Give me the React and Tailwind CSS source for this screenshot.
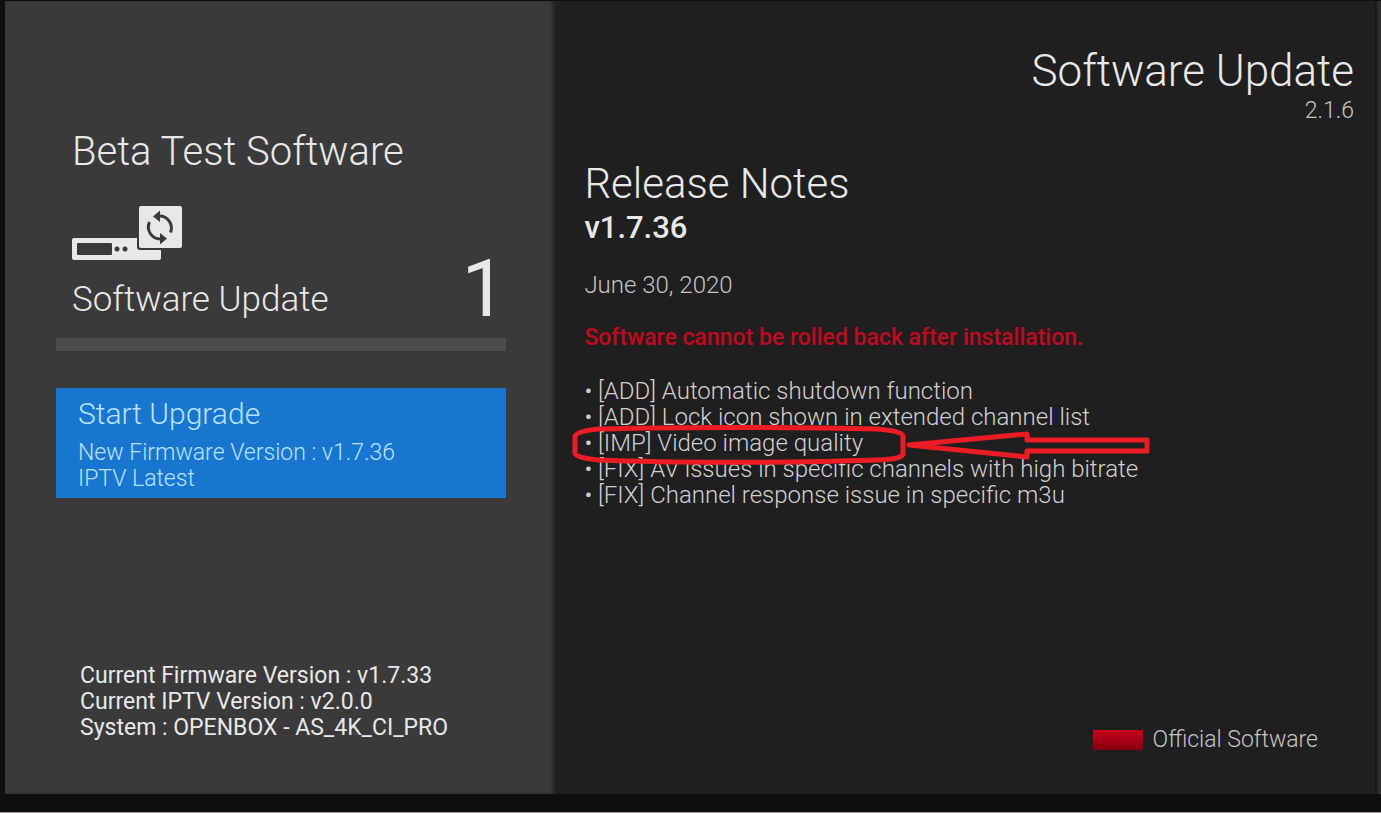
const systemInfo = [
  'Current Firmware Version : v1.7.33',
  'Current IPTV Version : v2.0.0',
  'System : OPENBOX - AS_4K_CI_PRO',
];

const releaseNotes = [
  { tag: 'ADD', text: 'Automatic shutdown function' },
  { tag: 'ADD', text: 'Lock icon shown in extended channel list' },
  { tag: 'IMP', text: 'Video image quality', marked: true },
  { tag: 'FIX', text: 'AV issues in specific channels with high bitrate' },
  { tag: 'FIX', text: 'Channel response issue in specific m3u' },
];

function ReceiverIcon() {
  return (
    <svg width="110" height="55" viewBox="0 0 110 55" fill="none" aria-hidden="true">
      <rect x="0" y="32" width="89" height="22" rx="2" fill="#e8e8e8" />
      <rect x="5" y="37" width="35" height="12" rx="1" fill="#3a3a3a" />
      <circle cx="45" cy="43" r="2.5" fill="#3a3a3a" />
      <circle cx="53" cy="43" r="2.5" fill="#3a3a3a" />
      <rect x="65" y="-2" width="47" height="46" rx="3" fill="#3a3a3a" />
      <rect x="67" y="0" width="43" height="42" rx="2" fill="#e8e8e8" />
      <g stroke="#3a3a3a" strokeWidth="3">
        <path d="M87 10 A12 12 0 0 1 98.5 26.5" />
        <path d="M77.5 16 A12 12 0 0 0 89 33" />
      </g>
      <path d="M88 4.5 V16 L81 10.5 Z" fill="#3a3a3a" />
      <path d="M88 27 V38.5 L95 32.5 Z" fill="#3a3a3a" />
    </svg>
  );
}

// Hand-drawn outline round a note, with an arrow pointing at it
function Marker() {
  return (
    <svg
      className="absolute -left-[13px] -top-1.5 z-10 pointer-events-none"
      width="582"
      height="42"
      viewBox="0 0 582 42"
      fill="none"
      stroke="#ed1c24"
      strokeWidth="5"
      strokeLinejoin="round"
      aria-hidden="true"
    >
      <path d="M28 5 C110 3 230 3 306 5 Q332 7 332 12 V30 Q332 35 306 36 C220 39 100 39 28 36 Q4 34 4 29 V13 Q4 7 28 5 Z" />
      <path d="M338 21 L456 10 V16 H576 V27 H456 V33 Z" />
    </svg>
  );
}

function Sidebar() {
  return (
    <aside className="flex w-2/5 shrink-0 flex-col bg-[#3a3a3a] pt-[127px] pr-[49px] pb-[53px] pl-[51px] shadow-[inset_-3px_0_3px_rgba(0,0,0,0.35)]">
      <h2 className="pl-4 text-[40px] leading-[48px] font-light">Beta Test Software</h2>
      <div className="mt-[30px] flex items-end justify-between pl-4">
        <div>
          <ReceiverIcon />
          <h3 className="mt-[17px] text-[35px] leading-[44px] font-light">Software Update</h3>
        </div>
        <span className="text-[80px] leading-[66px]">1</span>
      </div>
      <div className="mt-4 h-[13px] bg-[#4d4d4d]" />
      <button
        type="button"
        className="mt-[37px] block bg-[#1976d0] px-[22px] pt-2 pb-1.5 text-left font-light text-[#b8e2fb]"
      >
        <span className="mb-2 block text-[30px] leading-9">Start Upgrade</span>
        <span className="block text-[23px] leading-[26px]">New Firmware Version : v1.7.36</span>
        <span className="block text-[23px] leading-[26px]">IPTV Latest</span>
      </button>
      <div className="mt-auto pl-6 text-[23px] leading-[26px]">
        {systemInfo.map((line) => (
          <p key={line}>{line}</p>
        ))}
      </div>
    </aside>
  );
}

function ReleaseNotes() {
  return (
    <main className="flex min-w-0 flex-1 flex-col bg-[#1f1f1f] pt-11 pr-[21px] pb-[39px] pl-[29px] font-light">
      <header className="text-right">
        <h1 className="text-[44px] leading-[52px]">Software Update</h1>
        <p className="text-[23px] leading-7 text-[#c4c4c4]">2.1.6</p>
      </header>
      <h2 className="mt-[33px] text-[42px] leading-[52px]">Release Notes</h2>
      <p className="text-[31px] leading-9 font-medium">v1.7.36</p>
      <p className="mt-[26px] text-2xl leading-[26px] text-[#c4c4c4]">June 30, 2020</p>
      <p className="mt-[27px] text-[23px] leading-[26px] font-medium text-[#c00a20]">
        Software cannot be rolled back after installation.
      </p>
      <ul className="mt-[27px] text-2xl leading-[26px] text-[#d0d0d0]">
        {releaseNotes.map(({ tag, text, marked }) => (
          <li key={text} className="relative">
            • [{tag}] {text}
            {marked && <Marker />}
          </li>
        ))}
      </ul>
      <button
        type="button"
        className="mt-auto mr-9 flex items-center gap-2.5 self-end text-[23px] leading-[30px] text-[#c4c4c4]"
      >
        <span className="h-5 w-[50px] bg-linear-to-b from-[#c8001a] to-[#86000f]" />
        Official Software
      </button>
    </main>
  );
}

export default function App() {
  return (
    <div className="flex min-h-screen border-b border-[#a8a0a0] bg-[#0f0f0f] pt-px pb-[18px] pl-[5px] font-['Roboto',sans-serif] text-[#e8e8e8]">
      <Sidebar />
      <ReleaseNotes />
      <div className="w-1.5 shrink-0 border-l-2 border-[#161616] bg-[#2e2e2e]" />
    </div>
  );
}
